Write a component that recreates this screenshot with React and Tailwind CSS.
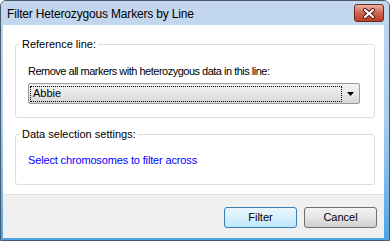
import React from "react";

// Win7-style dialog: Filter Heterozygous Markers by Line
const font = { fontFamily: '"Liberation Sans", Arial, sans-serif' };

const GroupBox = ({ label, className = "", children }) => (
  <div className={`relative border border-[#d5dfe5] rounded-[3px] ${className}`}>
    <span className="absolute left-[4px] -top-[8px] px-[2px] bg-white text-[11px] leading-[15px] text-black">
      {label}
    </span>
    {children}
  </div>
);

const CloseButton = () => (
  <div className="w-[30px] h-[18px] mt-[3px] mr-[5px] rounded-[3px] border border-[#6b2a22] bg-gradient-to-b from-[#eab0a2] via-[#d06450] to-[#bf3a24] flex items-center justify-center">
    <svg width="14" height="11" viewBox="0 0 14 11">
      <path d="M3 2 L11 9 M11 2 L3 9" stroke="#4a1a14" strokeWidth="4" strokeLinecap="round" />
      <path d="M3 2 L11 9 M11 2 L3 9" stroke="#ffffff" strokeWidth="2.2" strokeLinecap="round" />
    </svg>
  </div>
);

const Combo = ({ value }) => (
  <div className="ml-[12px] mt-[4px] w-[332px] h-[21px] border border-[#9a9a9a] rounded-[2px] bg-gradient-to-b from-[#f3f3f3] via-[#e8e8e8] to-[#d6d6d6] flex items-center">
    <div className="ml-[1px] w-[312px] h-[16px] border border-dotted border-black flex items-center pl-[2px] text-[11px] leading-[15px] text-black">
      {value}
    </div>
    <div className="flex-1 flex items-center justify-center">
      <svg width="7" height="4" viewBox="0 0 7 4">
        <path d="M0 0 L7 0 L3.5 4 Z" fill="#000" />
      </svg>
    </div>
  </div>
);

const Button = ({ label, isDefault }) => (
  <button
    className={
      isDefault
        ? "w-[73px] h-[21px] rounded-[3px] border border-[#3c7fb1] bg-gradient-to-b from-[#eaf6fd] via-[#d9f0fc] to-[#bee6fd] text-[11px] leading-[15px] text-black"
        : "w-[73px] h-[21px] rounded-[3px] border border-[#707070] bg-gradient-to-b from-[#f2f2f2] via-[#e6e6e6] to-[#cfcfcf] text-[11px] leading-[15px] text-black"
    }
  >
    {label}
  </button>
);

export default function App() {
  return (
    <div
      className="w-[390px] h-[241px] border border-[#4a5a6c] rounded-t-[6px] bg-gradient-to-b from-[#c2d7ee] via-[#a9cdee] to-[#4aa3e4] flex flex-col overflow-hidden"
      style={font}
    >
      {/* title bar */}
      <div className="h-[24px] shrink-0 flex items-start justify-between bg-[#c2d7ee]">
        <span className="pl-[6px] pt-[6px] text-[12px] leading-[15px] tracking-[-0.17px] text-black">
          Filter Heterozygous Markers by Line
        </span>
        <CloseButton />
      </div>

      {/* client */}
      <div className="ml-[2px] mr-[5px] flex flex-col">
        <div className="h-[170px] bg-white border-b border-[#dfdfdf] pl-[12px] pt-[19px]">
          <GroupBox label="Reference line:" className="w-[360px] h-[74px]">
            <div className="pt-[19px]">
              <div className="pl-[12px] text-[11px] leading-[15px] tracking-[-0.5px] text-black">
                Remove all markers with heterozygous data in this line:
              </div>
              <Combo value="Abbie" />
            </div>
          </GroupBox>
          <GroupBox label="Data selection settings:" className="w-[360px] h-[51px] mt-[16px]">
            <div className="pt-[18px] pl-[12px] text-[11px] leading-[15px] tracking-[-0.15px] text-[#0000ff]">
              Select chromosomes to filter across
            </div>
          </GroupBox>
        </div>
        <div className="h-[43px] bg-[#f0f0f0] flex justify-end items-start gap-[7px] pt-[12px] pr-[7px]">
          <Button label="Filter" isDefault />
          <Button label="Cancel" />
        </div>
      </div>
    </div>
  );
}
